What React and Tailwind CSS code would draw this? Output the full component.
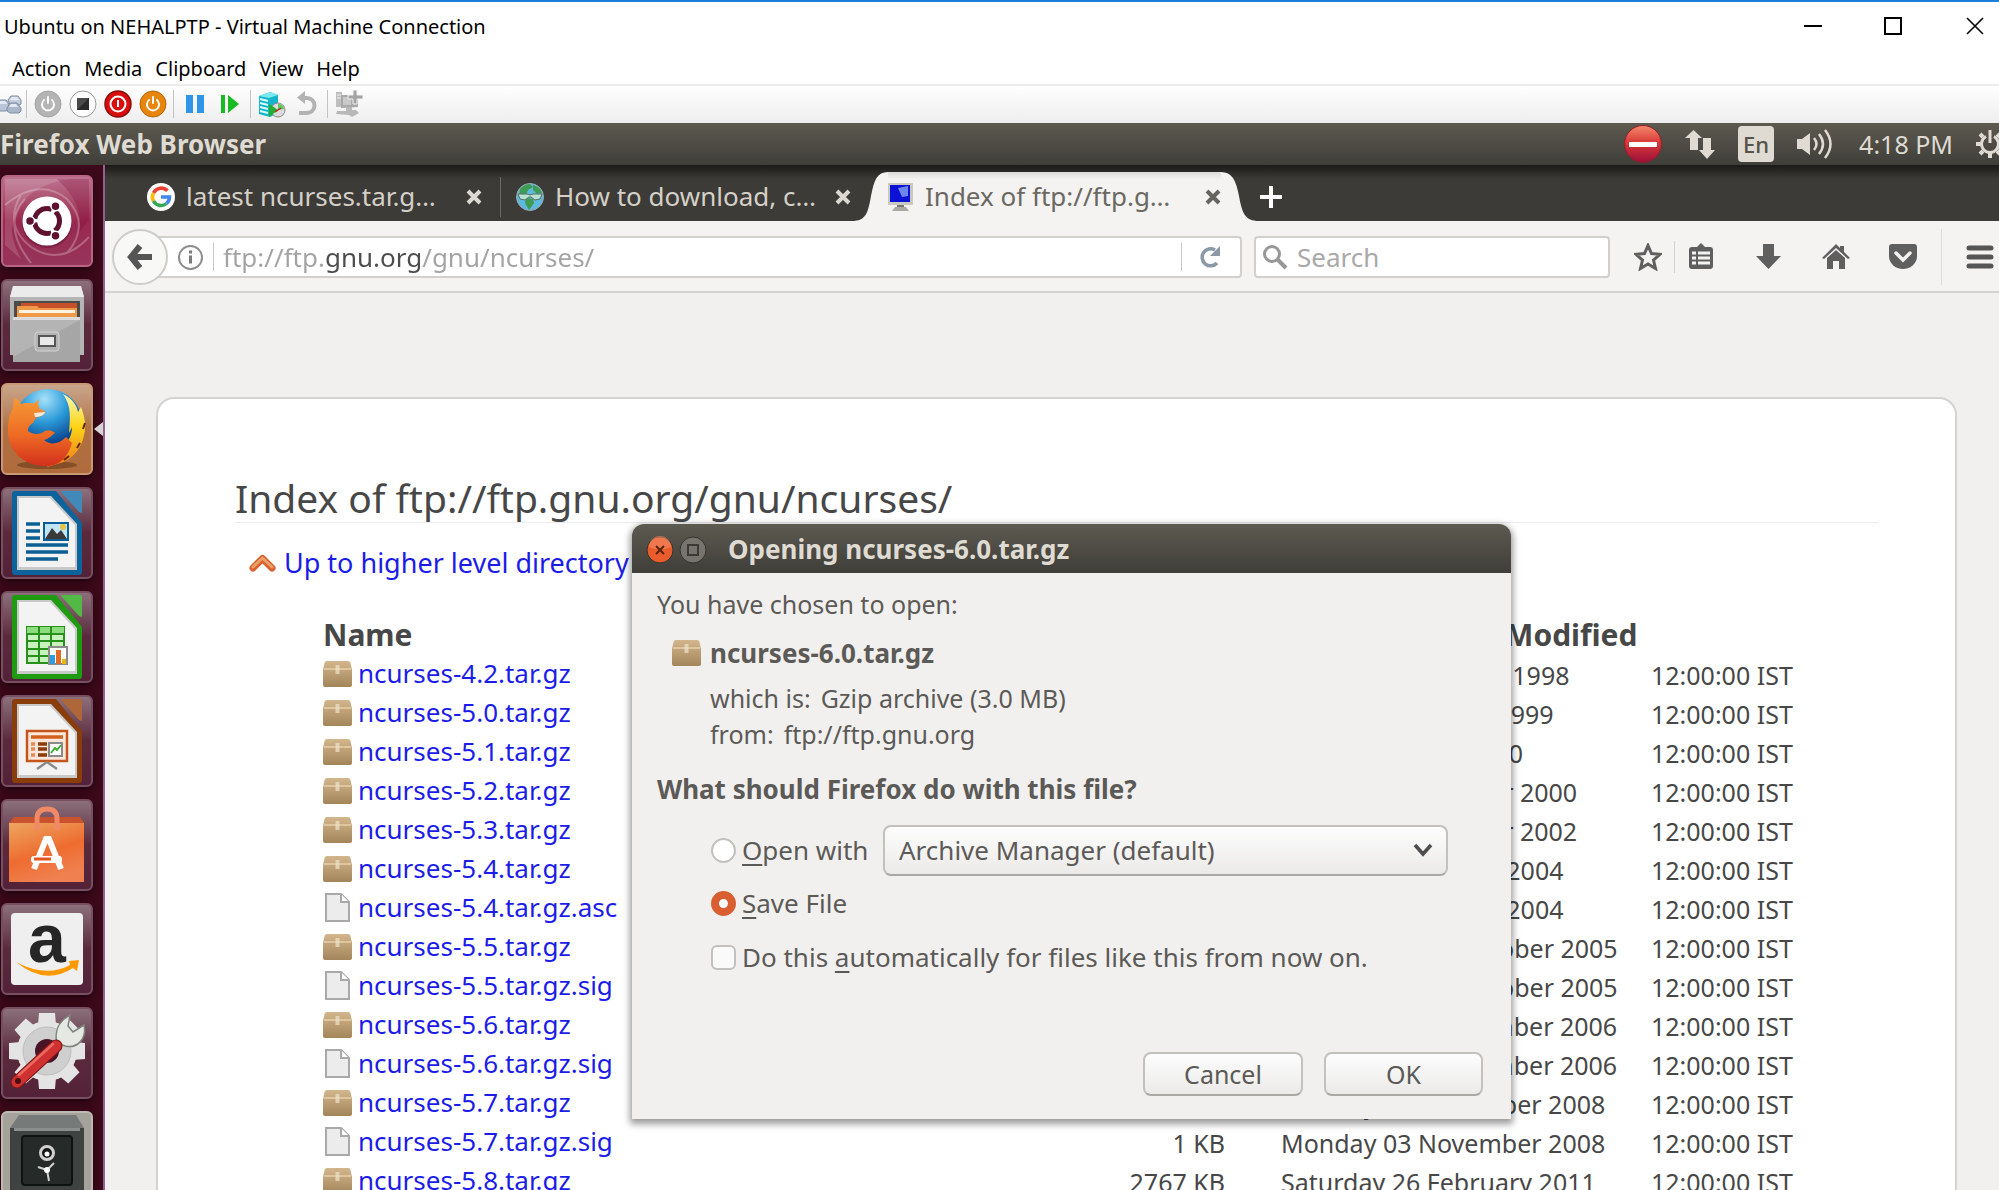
import { useState } from 'react'

const FILES = [
  { name: 'ncurses-4.2.tar.gz', size: '1012 KB', date: 'Thursday 05 March 1998' },
  { name: 'ncurses-5.0.tar.gz', size: '1292 KB', date: 'Friday 22 October 1999' },
  { name: 'ncurses-5.1.tar.gz', size: '1630 KB', date: 'Monday 10 July 2000' },
  { name: 'ncurses-5.2.tar.gz', size: '1687 KB', date: 'Monday 23 October 2000' },
  { name: 'ncurses-5.3.tar.gz', size: '1976 KB', date: 'Monday 14 October 2002' },
  { name: 'ncurses-5.4.tar.gz', size: '2050 KB', date: 'Friday 13 February 2004' },
  { name: 'ncurses-5.4.tar.gz.asc', size: '1 KB', date: 'Friday 13 February 2004' },
  { name: 'ncurses-5.5.tar.gz', size: '2206 KB', date: 'Wednesday 12 October 2005' },
  { name: 'ncurses-5.5.tar.gz.sig', size: '1 KB', date: 'Wednesday 12 October 2005' },
  { name: 'ncurses-5.6.tar.gz', size: '2346 KB', date: 'Thursday 21 December 2006' },
  { name: 'ncurses-5.6.tar.gz.sig', size: '1 KB', date: 'Thursday 21 December 2006' },
  { name: 'ncurses-5.7.tar.gz', size: '2388 KB', date: 'Monday 03 November 2008' },
  { name: 'ncurses-5.7.tar.gz.sig', size: '1 KB', date: 'Monday 03 November 2008' },
  { name: 'ncurses-5.8.tar.gz', size: '2767 KB', date: 'Saturday 26 February 2011' },
]

/* ---------- Virtual machine window ---------- */

function TitleBar() {
  return (
    <header className="flex h-[52px] items-center justify-between overflow-hidden border-t-2 border-[#1e80d8] bg-white pl-1">
      <h1 className="text-[20px]">Ubuntu on NEHALPTP - Virtual Machine Connection</h1>
      <div className="-mr-3.5 flex pb-0.5">
        <button aria-label="Minimize" className="grid h-12 w-20 place-items-center">
          <svg width="18" height="18" viewBox="0 0 18 18"><path d="M0 9h18" stroke="#000" strokeWidth="2" /></svg>
        </button>
        <button aria-label="Maximize" className="grid h-12 w-20 place-items-center">
          <svg width="18" height="18" viewBox="0 0 18 18"><path d="M1 1h16v16H1z" fill="none" stroke="#000" strokeWidth="2" /></svg>
        </button>
        <button aria-label="Close" className="grid h-12 w-20 place-items-center pl-1">
          <svg width="18" height="18" viewBox="0 0 18 18"><path d="M1 1l16 16M17 1L1 17" stroke="#000" strokeWidth="1.6" /></svg>
        </button>
      </div>
    </header>
  )
}

function MenuBar() {
  return (
    <nav className="flex h-8 items-center gap-[13px] bg-white pb-0.5 pl-3 pt-1 text-[20px]">
      {['Action', 'Media', 'Clipboard', 'View', 'Help'].map((item) => (
        <button key={item}>{item}</button>
      ))}
    </nav>
  )
}

function Separator() {
  return <div className="mx-[3px] h-7 w-px shrink-0 bg-[#c4c4c4]" />
}

function ToolButton({ label, children }) {
  return (
    <button aria-label={label} className="grid h-7 w-[35px] shrink-0 place-items-center">
      <svg width="28" height="28" viewBox="0 0 28 28">{children}</svg>
    </button>
  )
}

function PowerGlyph() {
  return <path d="M10 10a6 6 0 1 0 8 0M14 7v6" fill="none" stroke="#fff" strokeWidth="2" strokeLinecap="round" />
}

function VmToolbar() {
  return (
    <div className="flex h-[39px] items-center overflow-hidden border-t-2 border-[#ececec] bg-linear-to-b from-white via-[#f6f6f6] to-[#eeeeee] pb-0.5">
      <button aria-label="Ctrl+Alt+Delete" className="w-[23px] shrink-0">
        <svg width="22" height="20" viewBox="0 0 22 20">
          <g stroke="#7f8ea3" strokeWidth="1">
            <path d="M-3 10l3-4h6l3 4v5l-3 2h-9z" fill="#b9c4d6" />
            <path d="M8 6l3-4h7l3 4v4l-2 1h-9z" fill="#c3cddd" />
            <path d="M7 14l3-5h7l4 5v3l-2 2h-9l-3-2z" fill="#aab6c8" />
          </g>
          <path d="M12 3h5l2 3h-9zM11 10h5l2 3H9zM0 7h5l2 3h-7z" fill="#e4eaf3" />
        </svg>
      </button>
      <Separator />
      <ToolButton label="Start">
        <circle cx="14" cy="14" r="13" fill="#b4b4b4" stroke="#a3a3a3" />
        <PowerGlyph />
      </ToolButton>
      <ToolButton label="Turn off">
        <circle cx="14" cy="14" r="13" fill="#fff" stroke="#9a9a9a" />
        <path d="M8 8h12v12H8z" fill="#2a2a2a" />
        <path d="M8 8h12L8 20z" fill="#4a4a4a" />
      </ToolButton>
      <ToolButton label="Shut down">
        <circle cx="14" cy="14" r="13" fill="#d90f0f" stroke="#8e0b0b" strokeWidth="1.5" />
        <circle cx="14" cy="14" r="7.5" fill="none" stroke="#fff" strokeWidth="2" />
        <path d="M14 10v7" stroke="#fff" strokeWidth="2" />
      </ToolButton>
      <ToolButton label="Save">
        <circle cx="14" cy="14" r="13" fill="#e8850c" stroke="#b86605" />
        <PowerGlyph />
      </ToolButton>
      <Separator />
      <ToolButton label="Pause">
        <path d="M5 5h7v18H5zM16 5h7v18h-7z" fill="#2f95e8" />
      </ToolButton>
      <ToolButton label="Resume">
        <path d="M5 5h4v18H5zM12 5l11 9-11 9z" fill="#19bb22" />
      </ToolButton>
      <Separator />
      <ToolButton label="Checkpoint">
        <path d="M1 6l11-4 8 3v18l-8 4-11-3z" fill="#12b5c9" />
        <path d="M1 6l11-4 8 3-9 3z" fill="#7ce9f2" />
        <path d="M2 9l8 2M2 13l8 2M2 17l8 2M2 21l8 2" stroke="#d6fbff" strokeWidth="2" />
        <circle cx="20" cy="20" r="7" fill="#dcdcdc" stroke="#8a8a8a" />
        <path d="M11 14l9 6-9 7z" fill="#22b02a" />
        <path d="M20 14a6 6 0 0 1 6 5l-6 1z" fill="#5cc95f" />
        <path d="M17 22l6-4" stroke="#c22" strokeWidth="1.5" />
      </ToolButton>
      <ToolButton label="Revert">
        <path d="M9 8h5a7.500 7.500 0 0 1 0 15H6" fill="none" stroke="#b3b3b3" strokeWidth="4" />
        <path d="M12 1v13L4 7.500z" fill="#b3b3b3" />
      </ToolButton>
      <Separator />
      <ToolButton label="Enhanced session">
        <path d="M1 2h6v15H1z" fill="#bdbdbd" />
        <path d="M2 5h4M2 8h4" stroke="#e2e2e2" strokeWidth="1.500" />
        <path d="M6 5h17v12l-17 1z" fill="#a9a9a9" />
        <path d="M8 7h8v8H8z" fill="#c9c9c9" />
        <path d="M18 0h4v5h6v4h-6v5h-4V9h-5V5h5z" fill="#a3a3a3" stroke="#f0f0f0" />
        <path d="M11 17h6v3h4l3 3-7 4-3-2-13-1 1-3h9z" fill="#b8b8b8" />
      </ToolButton>
    </div>
  )
}

/* ---------- Ubuntu top panel ---------- */

function TopPanel() {
  return (
    <div className="flex h-[42px] items-center justify-between overflow-hidden bg-linear-to-b from-[#5d5a50] to-[#3f3e39] text-[#dfdbd2]">
      <span className="text-[26px] font-bold leading-8">Firefox Web Browser</span>
      <div className="flex items-center gap-[23px]">
        <button aria-label="Do not disturb">
          <svg width="38" height="38" viewBox="0 0 38 38">
            <defs>
              <linearGradient id="stop" x1="0" y1="0" x2="0" y2="1">
                <stop offset="0" stopColor="#f58a6c" />
                <stop offset=".45" stopColor="#d93a38" />
                <stop offset="1" stopColor="#9c0f3a" />
              </linearGradient>
            </defs>
            <circle cx="19" cy="19" r="18.500" fill="url(#stop)" stroke="#8f2029" />
            <path d="M5 17h28v5H5z" fill="#fff" />
          </svg>
        </button>
        <button aria-label="Network">
          <svg width="30" height="30" viewBox="0 0 30 30" fill="#dfdbd2">
            <path d="M8.500 1l8.500 8h-4v12H5V9H0zM18 9h8v12h4l-8 9-8-9h4z" />
          </svg>
        </button>
        <button className="h-9 w-9 rounded bg-[#dfdbd2] text-[22px] font-medium leading-9 text-[#55534b]">En</button>
        <button aria-label="Sound">
          <svg width="35" height="30" viewBox="0 0 35 30">
            <path d="M0 10h5l8-6v22l-8-6H0z" fill="#dfdbd2" />
            <path d="M17 9q5 6 0 12M22 5q8 10 0 20M28 1q11 14 0 28" fill="none" stroke="#dfdbd2" strokeWidth="2.500" />
          </svg>
        </button>
        <span className="pl-1 text-[25px] leading-8">4:18 PM</span>
        <button aria-label="System" className="-mr-[5px]">
          <svg width="28" height="28" viewBox="0 0 28 28" fill="none" stroke="#dfdbd2">
            <path d="M10 6.500a8.500 8.500 0 1 0 8 0" strokeWidth="3" />
            <path d="M14 0v13" strokeWidth="3" />
            <path d="M0 14h5M23 14h5M14 23v5M4 4l3 3M24 4l-3 3M4 24l3-3M24 24l-3-3" strokeWidth="4" />
          </svg>
        </button>
      </div>
    </div>
  )
}

/* ---------- Launcher ---------- */

function UbuntuIcon() {
  return (
    <>
      <path d="M4 30Q38 2 66 24 90 50 66 78M30 88Q0 50 24 24M88 62Q60 92 30 72 2 50 20 20" fill="none" stroke="#fff" strokeOpacity=".25" strokeWidth="2" />
      <path d="M4 4h66Q20 10 12 50 8 60 20 84L4 70z" fill="#fff" opacity=".14" />
      <path d="M56 4Q84 30 78 58L88 44V4z" fill="#7a0030" opacity=".25" />
      <circle cx="46" cy="48" r="25" fill="#4a0a25" opacity=".35" />
      <circle cx="46" cy="46" r="24.500" fill="#fff" />
      <circle cx="46" cy="46" r="12.500" fill="none" stroke="#5e1230" strokeWidth="5" strokeDasharray="22.200 4" strokeDashoffset="11.100" />
      <g fill="#5e1230" stroke="#fff" strokeWidth="1.500">
        <circle cx="29" cy="46" r="4.500" />
        <circle cx="54.500" cy="31.300" r="4.500" />
        <circle cx="54.500" cy="60.700" r="4.500" />
      </g>
    </>
  )
}

function FilesIcon() {
  return (
    <>
      <path d="M9 18l3-11h68l3 11v58H9z" fill="#b5b5b5" />
      <path d="M9 18l3-11h68l3 11z" fill="#ebebeb" />
      <path d="M13 22h66v18H13z" fill="#4b4b49" />
      <path d="M20 24h56v6H20z" fill="#c5502a" />
      <path d="M16 27h20l2 2h38v10H16z" fill="#ef9a48" />
      <path d="M18 31h56v3H18z" fill="#fff2e0" />
      <path d="M12 38h67v45H12z" fill="#a6a6a6" />
      <path d="M12 38h67v3H12z" fill="#dcdcdc" />
      <path d="M12 41h67L12 78z" fill="#fff" opacity=".16" />
      <rect x="34" y="53" width="24" height="19" rx="3" fill="#b3b3b3" stroke="#d4d4d4" />
      <rect x="38" y="57" width="16" height="10" fill="#e8e8e8" stroke="#565656" strokeWidth="2" />
    </>
  )
}

function FirefoxIcon() {
  return (
    <>
      <defs>
        <radialGradient id="globe" cx=".45" cy=".15" r=".85">
          <stop offset="0" stopColor="#a5e2fb" />
          <stop offset=".4" stopColor="#2b9ad8" />
          <stop offset=".75" stopColor="#0c4a94" />
          <stop offset="1" stopColor="#1c1c55" />
        </radialGradient>
        <linearGradient id="fox" x1="0" y1="0" x2="0" y2="1">
          <stop offset="0" stopColor="#f59a35" />
          <stop offset=".55" stopColor="#ee6a24" />
          <stop offset="1" stopColor="#d2301c" />
        </linearGradient>
        <linearGradient id="tail" x1="0" y1="0" x2="0" y2="1">
          <stop offset="0" stopColor="#fff7b0" />
          <stop offset=".45" stopColor="#fbd417" />
          <stop offset="1" stopColor="#ee7a1e" />
        </linearGradient>
      </defs>
      <ellipse cx="46" cy="82" rx="30" ry="4" fill="#5c2f10" opacity=".5" />
      <circle cx="47" cy="40" r="34" fill="url(#globe)" />
      <path d="M62 11c10 5 14 12 15 18l3-5c3 8 6 18 3 28-2 12-10 22-20 27L46 84l10-18c10-4 15-12 15-22l-3 6c1-14 3-26-6-39z" fill="url(#tail)" />
      <path d="M13 15c3 0 5 3 7 6 6-2 10 0 14-1l4-4c-1 5-1 7 1 10l5 2c-1 5-5 5-9 7l-3 5c-4 2-5 5-5 8 5 4 12 4 17 0 4-2 8 0 10 2-3 2-6 6-11 7 6 5 14 5 22-3l6 6c-4 13-11 23-26 23C21 83 6 66 7 46c0-9 2-16 5-21z" fill="url(#fox)" />
      <path d="M33 30l11-1c0 3-6 5-10 5z" fill="#f8e8d8" />
      <path d="M84 40l-2 6M79 60l-3 5M68 73l-5 4" stroke="#6b2408" strokeWidth="2" />
    </>
  )
}

function OfficePage({ color, light, children }) {
  return (
    <>
      <path d="M14 4h41l26 32v49a3 3 0 0 1-3 3H14a3 3 0 0 1-3-3V7a3 3 0 0 1 3-3z" fill={color} />
      <path d="M60 4h19a2 2 0 0 1 2 2v20l-3-1-17-19z" fill={light} />
      <path d="M16 9h34l26 28v46H16z" fill="#c9c9c9" />
      <path d="M18 11h31l25 27v42H18z" fill="#f3f3f3" />
      {children}
    </>
  )
}

function WriterIcon() {
  return (
    <OfficePage color="#0d639c" light="#4189b8">
      <path d="M25 37h14M25 44h14M25 51h14M25 58h42M25 65h42M25 72h32" stroke="#0b5f94" strokeWidth="3.500" />
      <path d="M43 36h24v17H43z" fill="#bfe3f7" stroke="#0b5f94" strokeWidth="2" />
      <circle cx="62" cy="40" r="3" fill="#e5c33c" />
      <path d="M44 52l7-11 5 6 4-4 6 9z" fill="#3a3a3a" />
    </OfficePage>
  )
}

function CalcIcon() {
  return (
    <OfficePage color="#1f9b12" light="#52b947">
      <path d="M26 36h37v36H26z" fill="#c8f2bd" stroke="#27911c" strokeWidth="2" />
      <path d="M26 36h37v7H26z" fill="#8ddc7d" />
      <path d="M26 43h37M26 50h37M26 58h37M26 65h37M38 36v36M50 36v36" stroke="#27911c" strokeWidth="2" />
      <path d="M48 56h18v17H48z" fill="#fff" stroke="#8b8b8b" strokeWidth="2" />
      <path d="M49 64h5v9h-5z" fill="#2f9be0" />
      <path d="M55 59h5v14h-5z" fill="#e36a25" />
      <path d="M61 68h4v5h-4z" fill="#e9b714" />
    </OfficePage>
  )
}

function ImpressIcon() {
  return (
    <OfficePage color="#8a3d0a" light="#ad6738">
      <path d="M26 36h40v30H26z" fill="#fbe6db" stroke="#c4551b" strokeWidth="2.500" />
      <path d="M30 42h32" stroke="#d2601f" strokeWidth="3.500" />
      <path d="M30 49h4M30 54h4M30 60h4" stroke="#e58a55" strokeWidth="3.500" />
      <path d="M37 49h9M37 54h9M37 60h9" stroke="#8a3d0a" strokeWidth="3.500" />
      <path d="M48 48h13v13H48z" fill="#fff" stroke="#8b8b8b" strokeWidth="2" />
      <path d="M50 58l4-5 2 2 4-5" fill="none" stroke="#3fae35" strokeWidth="2" />
      <path d="M46 67l-10 7M46 67l10 7" stroke="#8b8b8b" strokeWidth="2.500" />
    </OfficePage>
  )
}

function SoftwareIcon() {
  return (
    <>
      <defs>
        <linearGradient id="bag" x1="0" y1="0" x2=".4" y2="1">
          <stop offset="0" stopColor="#eda560" />
          <stop offset=".6" stopColor="#ee6c30" />
          <stop offset="1" stopColor="#f08050" />
        </linearGradient>
      </defs>
      <path d="M8 24l5-6h66l4 6z" fill="#c9532e" />
      <path d="M8 24h75v59H8z" fill="url(#bag)" />
      <path d="M36 31V20q0-10 10-10t10 10v11" fill="none" stroke="#f08a66" strokeWidth="5" />
      <path d="M33 70l12-30h3l12 30" fill="none" stroke="#fff" strokeWidth="6" />
      <rect x="30" y="57" width="31" height="7" rx="3" fill="#fff" />
      <path d="M33 60h17" stroke="#e8541e" strokeWidth="3" />
    </>
  )
}

function AmazonIcon() {
  return (
    <>
      <rect x="10" y="10" width="72" height="72" rx="4" fill="#efefef" />
      <text x="46" y="59" textAnchor="middle" fontFamily="Liberation Sans, sans-serif" fontWeight="700" fontSize="68" fill="#262626">a</text>
      <path d="M15 59q30 16 54 3l-1-4 10-1-2 11-4-3q-28 18-57-6z" fill="#ff9900" />
    </>
  )
}

function SettingsIcon() {
  return (
    <>
      <g fill="#e4e4e4">
        {[0, 45, 90, 135].map((deg) => (
          <path key={deg} d="M38 6h16l1 12v52l-1 12H38l-1-12V18z" transform={`rotate(${deg} 46 44)`} />
        ))}
        <circle cx="46" cy="44" r="30" />
      </g>
      <circle cx="46" cy="44" r="24" fill="#cfcfcf" stroke="#bdbdbd" />
      <circle cx="46" cy="44" r="12" fill="#4a1426" />
      <path d="M56 36c-3-12 2-22 13-28l-2 11 5 6 11-7c3 14-7 24-19 21z" fill="#e6e8e4" stroke="#7f837c" strokeWidth="1.500" />
      <path d="M55 39L16 75" stroke="#7c1616" strokeWidth="13" strokeLinecap="round" />
      <path d="M55 39L16 75" stroke="#cf3030" strokeWidth="11" strokeLinecap="round" />
      <path d="M52 37L18 68" stroke="#ea6a62" strokeWidth="2.500" strokeLinecap="round" />
      <circle cx="17" cy="74" r="3" fill="#4a0d10" />
    </>
  )
}

function SafeIcon() {
  return (
    <>
      <path d="M18 4h57l8 13H9z" fill="#767a78" />
      <path d="M9 17h74v75H9z" fill="#3e4240" />
      <path d="M13 17h66v3H13z" fill="#8a8e8c" />
      <rect x="21" y="25" width="50" height="49" rx="3" fill="#262a28" stroke="#101211" strokeWidth="2" />
      <circle cx="46" cy="42" r="6.500" fill="#151515" stroke="#d0d0d0" strokeWidth="3" />
      <circle cx="46" cy="43" r="2.500" fill="#fff" />
      <path d="M46 59l-9-3M46 59l7-7M46 59l2 11" stroke="#d0d0d0" strokeWidth="2" />
      <circle cx="46" cy="59" r="3" fill="#fff" />
    </>
  )
}

const GLASS = 'bg-linear-to-b from-[#8c707c] via-[#5a2a3c] to-[#542238] border-[#764f60]'

const LAUNCHER = [
  { label: 'Search your computer', Icon: UbuntuIcon, tile: 'bg-linear-to-b from-[#bd7590] via-[#99284f] to-[#97355a] border-[#b86484]' },
  { label: 'Files', Icon: FilesIcon, tile: GLASS },
  { label: 'Firefox Web Browser', Icon: FirefoxIcon, tile: 'bg-linear-to-b from-[#c9a68c] via-[#b07144] to-[#b06b3c] border-[#c89a74]', active: true },
  { label: 'LibreOffice Writer', Icon: WriterIcon, tile: GLASS },
  { label: 'LibreOffice Calc', Icon: CalcIcon, tile: GLASS },
  { label: 'LibreOffice Impress', Icon: ImpressIcon, tile: GLASS },
  { label: 'Ubuntu Software', Icon: SoftwareIcon, tile: GLASS },
  { label: 'Amazon', Icon: AmazonIcon, tile: GLASS },
  { label: 'System Settings', Icon: SettingsIcon, tile: GLASS },
  { label: 'Safe', Icon: SafeIcon, tile: 'bg-[#a5a29b] border-[#bdbab3]' },
]

function Launcher() {
  return (
    <aside className="flex w-[105px] shrink-0 flex-col gap-3 overflow-hidden border-r-2 border-[#93628c] bg-[#3d0a1b] pt-[10px]">
      {LAUNCHER.map(({ label, Icon, tile, active }) => (
        <div key={label} className="flex shrink-0 items-center justify-between pl-px">
          <button aria-label={label} className={`h-[92px] w-[92px] overflow-hidden rounded-md border-2 shadow-[0_3px_8px_#20040d] ${tile}`}>
            <svg className="-m-0.5" width="92" height="92" viewBox="0 0 92 92"><Icon /></svg>
          </button>
          {active && (
            <svg width="9" height="14" viewBox="0 0 9 14"><path d="M9 0v14L0 7z" fill="#d8d4d4" /></svg>
          )}
        </div>
      ))}
    </aside>
  )
}

/* ---------- Firefox ---------- */

function GoogleIcon() {
  return (
    <svg className="shrink-0" width="28" height="28" viewBox="0 0 28 28">
      <circle cx="14" cy="14" r="14" fill="#fff" />
      <g fill="none" strokeWidth="3.600">
        <path d="M20.400 7.800A8.500 8.500 0 0 0 6.500 10" stroke="#ea4335" />
        <path d="M6.500 10a8.500 8.500 0 0 0 0 8" stroke="#fbbc05" />
        <path d="M6.500 18a8.500 8.500 0 0 0 13 2.500" stroke="#34a853" />
        <path d="M19.500 20.500A8.500 8.500 0 0 0 22.500 14H14" stroke="#4285f4" />
      </g>
    </svg>
  )
}

function EarthIcon() {
  return (
    <svg className="shrink-0" width="28" height="28" viewBox="0 0 28 28">
      <circle cx="14" cy="14" r="13.500" fill="#5fb8dd" stroke="#9aa7a8" />
      <path d="M4 6q5-5 10-5l3 3-5 3-2 5-7 2zM17 2q7 2 9 8l-5 1-4-4zM10 15l7 1 1 4-5 7-4-7z" fill="#3f9b52" />
      <path d="M2 11h9l3 1 3-1h9l-2 5-5 1-4-3h-2l-4 3-5-1z" fill="#b8e0cf" stroke="#55706b" />
    </svg>
  )
}

function MonitorIcon() {
  return (
    <svg className="shrink-0" width="25" height="28" viewBox="0 0 25 28">
      <path d="M0 0h25v22H0z" fill="#c9c9c2" />
      <path d="M2 2h20v17H2z" fill="#0b12d6" />
      <path d="M10 5l10-2v10l-6 1z" fill="#6d86ee" />
      <path d="M9 22h7v2H9z" fill="#77776f" />
      <path d="M7 24h11l3 4H4z" fill="#aaaaa2" />
    </svg>
  )
}

function CloseTab({ color }) {
  return (
    <button aria-label="Close tab" className="shrink-0">
      <svg width="16" height="16" viewBox="0 0 16 16"><path d="M2 2l12 12M14 2L2 14" stroke={color} strokeWidth="4" /></svg>
    </button>
  )
}

function TabStrip() {
  return (
    <div className="flex h-14 shrink-0 items-end bg-linear-to-b from-[#1b1a18] via-[#3c3b37] via-25% to-[#3c3b37] text-[26px] text-[#d4d0c8]">
      <div className="flex h-[49px] w-[395px] shrink-0 items-center pl-[42px]">
        <GoogleIcon />
        <span className="w-[291px] pl-[11px]">latest ncurses.tar.g…</span>
        <CloseTab color="#dcd9d2" />
      </div>
      <div className="mb-1 h-10 w-px bg-[#6b6963]" />
      <div className="flex h-[49px] w-[351px] shrink-0 items-center pl-[15px]">
        <EarthIcon />
        <span className="w-[291px] pl-[11px]">How to download, c…</span>
        <CloseTab color="#dcd9d2" />
      </div>
      <svg className="shrink-0" width="36" height="49" viewBox="0 0 36 49">
        <path d="M0 49C14 49 16 41 19 24C22 8 25 0 36 0V49z" fill="#f4f3f1" />
      </svg>
      <div className="flex h-[49px] w-[333px] shrink-0 items-center bg-linear-to-b from-[#dcdbd8] via-[#f4f3f1] via-15% to-[#f4f3f1] text-[#6b6862]">
        <MonitorIcon />
        <span className="w-[292px] pl-[12px]">Index of ftp://ftp.g…</span>
        <CloseTab color="#66645f" />
      </div>
      <svg className="shrink-0" width="38" height="49" viewBox="0 0 38 49">
        <path d="M38 49C24 49 21 41 18 24C15 8 11 0 0 0V49z" fill="#f4f3f1" />
      </svg>
      <button aria-label="New tab" className="mb-3 shrink-0">
        <svg width="24" height="24" viewBox="0 0 24 24"><path d="M12 1v22M1 12h22" stroke="#fff" strokeWidth="4" /></svg>
      </button>
    </div>
  )
}

function NavButton({ label, children }) {
  return (
    <button aria-label={label} className="shrink-0">
      <svg width="28" height="28" viewBox="0 0 28 28" fill="#5f5f5f">{children}</svg>
    </button>
  )
}

function NavBar() {
  return (
    <div className="flex h-[72px] shrink-0 items-center border-b-2 border-[#d5d3d0] bg-[#f4f3f1] pl-[7px] pr-[5px] pt-0.5">
      <button aria-label="Back" className="z-10 grid h-14 w-14 shrink-0 place-items-center rounded-full border-2 border-[#cfcdca] bg-[#f8f8f7]">
        <svg width="26" height="28" viewBox="0 0 26 28"><path d="M13 3L4 14l9 11M5 14h20" fill="none" stroke="#555" strokeWidth="6" /></svg>
      </button>
      <div className="-ml-2.5 flex h-[42px] flex-1 items-center rounded-r border-2 border-[#d2d0cd] bg-white pl-[18px]">
        <button aria-label="Site information">
          <svg width="25" height="25" viewBox="0 0 25 25">
            <circle cx="12.500" cy="12.500" r="11.500" fill="none" stroke="#8c8c8c" strokeWidth="2" />
            <path d="M12.500 10.500v8M12.500 5.500v3" stroke="#7a7a7a" strokeWidth="3" />
          </svg>
        </button>
        <div className="ml-2.5 h-7 w-px bg-[#cccac7]" />
        <input
          aria-label="Address"
          defaultValue="ftp://ftp.gnu.org/gnu/ncurses/"
          className="ml-[9px] min-w-0 flex-1 bg-[linear-gradient(90deg,#a3a3a3_102px,#4c4c4c_102px,#4c4c4c_198px,#a3a3a3_198px)] bg-clip-text text-[26px] text-transparent outline-none"
        />
        <div className="h-7 w-px bg-[#cccac7]" />
        <button aria-label="Reload" className="ml-[17px] mr-[19px]">
          <svg width="22" height="22" viewBox="0 0 22 22">
            <path d="M18 17A8.500 8.500 0 1 1 16 4" fill="none" stroke="#8b98a5" strokeWidth="3.500" />
            <path d="M21 0v10H11z" fill="#8b98a5" />
          </svg>
        </button>
      </div>
      <label className="ml-3 flex h-[42px] w-[356px] items-center rounded border-2 border-[#d2d0cd] bg-white pl-[7px]">
        <svg className="shrink-0" width="25" height="25" viewBox="0 0 25 25" fill="none" stroke="#979797">
          <circle cx="9" cy="9" r="7.500" strokeWidth="3" />
          <path d="M14 14l9 9" strokeWidth="4" />
        </svg>
        <input aria-label="Search" placeholder="Search" className="ml-[9px] w-full text-[26px] outline-none placeholder:text-[#a9a9a9]" />
      </label>
      <div className="ml-6 flex shrink-0 items-center">
        <NavButton label="Bookmark">
          <path d="M14 2.500l3.500 8 8.500.8-6.500 5.700 2 8.500-7.500-4.500-7.500 4.500 2-8.500L2 11.300l8.500-.8z" fill="none" stroke="#5f5f5f" strokeWidth="3" />
        </NavButton>
        <div className="mx-3 h-8 w-px bg-[#d5d3d0]" />
        <NavButton label="Bookmarks menu">
          <path d="M5 4h5l4-4 4 4h5a3 3 0 0 1 3 3v16a3 3 0 0 1-3 3H5a3 3 0 0 1-3-3V7a3 3 0 0 1 3-3z" />
          <path d="M5 10h4M5 15h4M5 20h4M11 10h12M11 15h12M11 20h12" stroke="#f4f3f1" strokeWidth="3" />
        </NavButton>
        <div className="ml-10 flex items-center gap-[39px]">
          <NavButton label="Downloads"><path d="M8 1h11v12h7L13.500 26 1 13h7z" /></NavButton>
          <NavButton label="Home">
            <path d="M14 1l4 4V3h4v6l6 6-2 1L14 5 2 16l-2-1z" />
            <path d="M5 15l9-8 9 8v11h-6v-8h-6v8H5z" />
          </NavButton>
          <NavButton label="Pocket">
            <path d="M3 1h22a3 3 0 0 1 3 3v9a14 13 0 0 1-28 0V4a3 3 0 0 1 3-3z" />
            <path d="M7 10l7 7 7-7" fill="none" stroke="#f4f3f1" strokeWidth="3.500" strokeLinecap="round" />
          </NavButton>
        </div>
        <div className="mx-6 h-14 w-px bg-[#dddbd8]" />
        <NavButton label="Menu">
          <path d="M3 5h22M3 14h22M3 23h22" stroke="#555" strokeWidth="5" strokeLinecap="round" />
        </NavButton>
      </div>
    </div>
  )
}

function PackageIcon() {
  return (
    <svg className="shrink-0" width="29" height="26" viewBox="0 0 29 26">
      <defs>
        <linearGradient id="box" x1="0" y1="0" x2="0" y2="1">
          <stop offset="0" stopColor="#d3b68c" />
          <stop offset="1" stopColor="#a3855a" />
        </linearGradient>
      </defs>
      <path d="M4 0h21q2 0 2.500 2L29 9v15q0 2-2 2H2q-2 0-2-2V9l1.500-7Q2 0 4 0z" fill="url(#box)" />
      <path d="M1 8h27" stroke="#e6d0ab" strokeWidth="1.500" />
      <path d="M12.500 4h4v9h-4z" fill="#efe2cb" opacity=".7" />
    </svg>
  )
}

function PageIcon() {
  return (
    <svg className="mx-0.5 shrink-0" width="25" height="29" viewBox="0 0 25 29">
      <path d="M1 1h15l8 8v19H1z" fill="#ececec" stroke="#a9a9a9" strokeWidth="2" />
      <path d="M16 1v8h8" fill="#fff" stroke="#a9a9a9" strokeWidth="2" />
    </svg>
  )
}

function FtpListing() {
  return (
    <main className="mt-[104px] mr-[42px] ml-[51px] rounded-t-[18px] border-2 border-b-0 border-[#d5d3cf] bg-white px-[77px] pt-[75px] text-[#474747]">
      <h2 className="border-b border-[#ececec] text-[39px] leading-[48px]">Index of ftp://ftp.gnu.org/gnu/ncurses/</h2>
      <a href="#up" className="mt-5 ml-3.5 flex w-fit items-center gap-2 text-[27px] leading-10 text-[#1c1ce8]">
        <svg width="27" height="18" viewBox="0 0 27 18" fill="none" strokeLinecap="round" strokeLinejoin="round">
          <path d="M4 14l9.500-9.500L23 14" stroke="#d9622f" strokeWidth="7" />
          <path d="M4 13l9.500-9L23 13" stroke="#eba06b" strokeWidth="3" />
        </svg>
        Up to higher level directory
      </a>
      <div className="mt-8 pl-[88px] pr-[87px]">
        <table className="w-full table-fixed text-left text-[25px]">
          <colgroup>
            <col />
            <col className="w-[220px]" />
            <col className="w-[370px]" />
            <col className="w-[140px]" />
          </colgroup>
          <thead>
            <tr className="h-[39px] text-[30px] leading-[39px]">
              <th className="font-bold">Name</th>
              <th className="pr-14 text-right font-bold">Size</th>
              <th colSpan={2} className="text-center font-bold">Last Modified</th>
            </tr>
          </thead>
          <tbody className="leading-[35px]">
            {FILES.map((file) => (
              <tr key={file.name} className="h-[39px]">
                <td>
                  <a href={`#${file.name}`} className="flex items-center gap-[6px] text-[26px] text-[#1c1ce8]">
                    {file.name.endsWith('.gz') ? <PackageIcon /> : <PageIcon />}
                    {file.name}
                  </a>
                </td>
                <td className="pt-1 pr-14 text-right">{file.size}</td>
                <td className="pt-1 whitespace-nowrap">{file.date}</td>
                <td className="pt-1 whitespace-nowrap">12:00:00 IST</td>
              </tr>
            ))}
          </tbody>
        </table>
      </div>
    </main>
  )
}

/* ---------- Download dialog ---------- */

const BUTTON = 'rounded-lg border-2 border-[#c3c1be] border-b-[#aaa8a5] bg-linear-to-b from-[#fdfdfd] to-[#ebeae8]'

function OpenDialog() {
  const [action, setAction] = useState('save')

  return (
    <section
      role="dialog"
      aria-label="Opening ncurses-6.0.tar.gz"
      className="absolute top-[231px] left-[527px] w-[879px] rounded-t-xl bg-[#f1f0ee] text-[25px] text-[#5c5a57] shadow-[0_3px_7px_2px_#00000066]"
    >
      <header className="flex h-[49px] items-center rounded-t-xl bg-linear-to-b from-[#5d5a50] to-[#3f3e39] pt-0.5 pl-[14px] text-[#dfdbd2]">
        <button aria-label="Close">
          <svg width="28" height="28" viewBox="0 0 28 28">
            <circle cx="14" cy="14" r="13" fill="#ea5c2b" stroke="#35332e" />
            <path d="M3 11a11 11 0 0 1 22 0q-11 5-22 0z" fill="#f58a66" opacity=".6" />
            <path d="M10 10l8 8M18 10l-8 8" stroke="#5a2310" strokeWidth="2" />
          </svg>
        </button>
        <button aria-label="Maximize" className="ml-[5px]">
          <svg width="28" height="28" viewBox="0 0 28 28">
            <circle cx="14" cy="14" r="13" fill="#76746c" stroke="#35332e" />
            <path d="M9 9h10v10H9z" fill="none" stroke="#3b3a35" strokeWidth="2" />
          </svg>
        </button>
        <h3 className="ml-[21px] text-[26px] font-bold">Opening ncurses-6.0.tar.gz</h3>
      </header>

      <div className="px-[25px] pt-[13px] pb-[23px]">
        <p className="leading-9">You have chosen to open:</p>
        <div className="mt-[13px] flex items-center gap-[9px] pl-[15px] text-[26px] leading-9">
          <PackageIcon />
          <strong>ncurses-6.0.tar.gz</strong>
        </div>
        <dl className="mt-[9px] pl-[53px] leading-9">
          <div className="flex gap-2.5"><dt>which is:</dt><dd>Gzip archive (3.0 MB)</dd></div>
          <div className="flex gap-2.5"><dt>from:</dt><dd>ftp://ftp.gnu.org</dd></div>
        </dl>
        <p className="mt-[19px] text-[26px] font-bold leading-9">What should Firefox do with this file?</p>

        <div className="mt-[17px] flex h-[52px] items-center pl-[54px]">
          <input
            id="open-with"
            type="radio"
            name="action"
            checked={action === 'open'}
            onChange={() => setAction('open')}
            className="h-[25px] w-[25px] appearance-none rounded-full border-2 border-[#c3c1be] bg-white checked:border-8 checked:border-[#d95f32]"
          />
          <label htmlFor="open-with" className="ml-[6px] w-[141px] text-[26px]"><u className="decoration-2 underline-offset-4">O</u>pen with</label>
          <div className="grid w-[565px] items-center">
            <select
              aria-label="Application"
              className={`col-start-1 row-start-1 h-[51px] w-full appearance-none pl-[14px] text-[26px] ${BUTTON}`}
            >
              <option>Archive Manager (default)</option>
            </select>
            <svg className="pointer-events-none col-start-1 row-start-1 mr-[15px] justify-self-end" width="20" height="14" viewBox="0 0 20 14">
              <path d="M2 2l8 9 8-9" fill="none" stroke="#4d4d4d" strokeWidth="3.500" />
            </svg>
          </div>
        </div>
        <div className="flex h-[54px] items-center pl-[54px]">
          <input
            id="save-file"
            type="radio"
            name="action"
            checked={action === 'save'}
            onChange={() => setAction('save')}
            className="h-[25px] w-[25px] appearance-none rounded-full border-2 border-[#c3c1be] bg-white checked:border-8 checked:border-[#d95f32]"
          />
          <label htmlFor="save-file" className="ml-[6px] text-[26px]"><u className="decoration-2 underline-offset-4">S</u>ave File</label>
        </div>
        <div className="flex h-[54px] items-center pl-[54px]">
          <input
            id="remember"
            type="checkbox"
            className="h-[25px] w-[25px] appearance-none rounded-md border-2 border-[#c3c1be] bg-[#fafafa] checked:bg-[#d95f32]"
          />
          <label htmlFor="remember" className="ml-[6px] text-[26px]">Do this <u className="decoration-2 underline-offset-4">a</u>utomatically for files like this from now on.</label>
        </div>

        <div className="mt-[68px] flex justify-end gap-[21px] pr-[3px]">
          <button className={`h-[44px] w-[160px] leading-9 ${BUTTON}`}>Cancel</button>
          <button className={`h-[44px] w-[159px] leading-9 ${BUTTON}`}>OK</button>
        </div>
      </div>
    </section>
  )
}

export default function App() {
  return (
    <div className="flex h-screen flex-col overflow-hidden bg-white font-['Noto_Sans','Open_Sans',sans-serif] text-black">
      <TitleBar />
      <MenuBar />
      <VmToolbar />
      <TopPanel />
      <div className="flex min-h-0 flex-1">
        <Launcher />
        <div className="flex min-w-0 flex-1 flex-col">
          <TabStrip />
          <NavBar />
          <div className="relative min-h-0 flex-1 overflow-hidden bg-[#f1f0ee]">
            <FtpListing />
            <OpenDialog />
          </div>
        </div>
      </div>
    </div>
  )
}
